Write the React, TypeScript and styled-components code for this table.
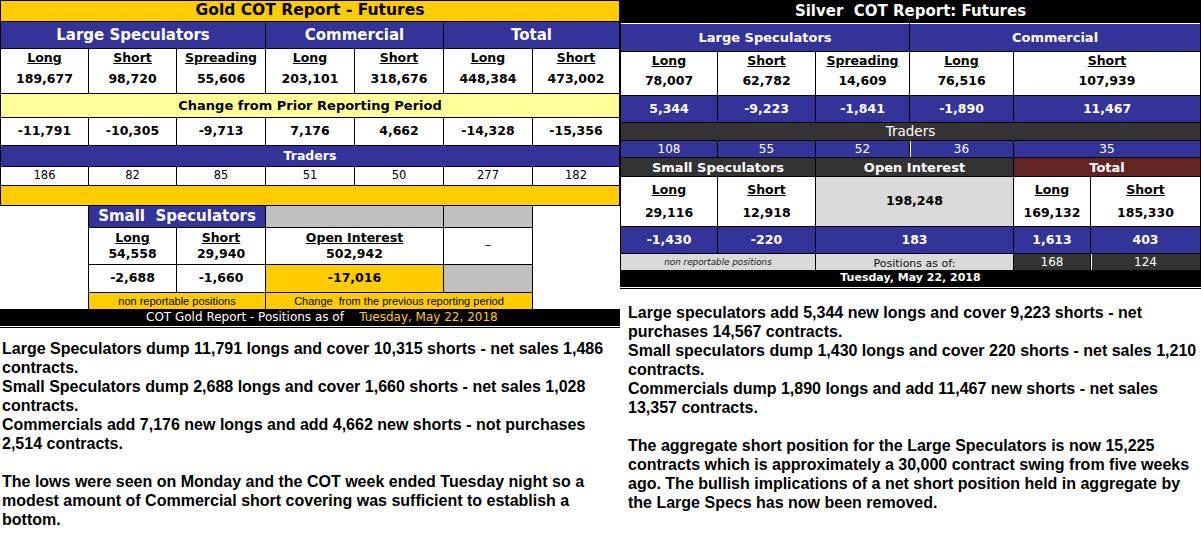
import React from "react";
import styled, { createGlobalStyle } from "styled-components";

const GlobalStyle = createGlobalStyle`
  html, body { margin: 0; padding: 0; background: #fff; }
  body { font-family: "DejaVu Sans", Verdana, sans-serif; }
`;

const BLUE = "#333399";
const GOLD = "#FFCC00";
const PALE = "#FFFF99";
const GREY = "#C0C0C0";
const LIGHT = "#D9D9D9";
const DARK = "#333333";
const MAROON = "#632523";

const Page = styled.div`
  display: flex;
  width: 1201px;
  height: 540px;
  overflow: hidden;
  background: #fff;
`;

const Column = styled.section<{ $w: number }>`
  width: ${(p) => p.$w}px;
  flex: none;
  display: flex;
  flex-direction: column;
`;

const Grid = styled.div<{ $cols: string; $rows: string; $pad: string }>`
  display: grid;
  grid-template-columns: ${(p) => p.$cols};
  grid-template-rows: ${(p) => p.$rows};
  gap: 1px;
  padding: ${(p) => p.$pad};
  background: #000;
  font-family: "DejaVu Sans", Verdana, sans-serif;
`;

type CellProps = {
  $span?: number;
  $rows?: number;
  $bg?: string;
  $fg?: string;
  $size?: number;
  $weight?: number;
  $italic?: boolean;
  $narrow?: boolean;
  $edge?: string;
  $top?: string;
  $alignY?: string;
  $padTop?: number;
  $bleed?: "left" | "right";
};

const Cell = styled.div<CellProps>`
  grid-column: span ${(p) => p.$span ?? 1};
  grid-row: span ${(p) => p.$rows ?? 1};
  background: ${(p) => p.$bg ?? "#fff"};
  color: ${(p) => p.$fg ?? "#000"};
  font-size: ${(p) => p.$size ?? 12.5}px;
  font-weight: ${(p) => p.$weight ?? 700};
  font-style: ${(p) => (p.$italic ? "italic" : "normal")};
  font-family: ${(p) =>
    p.$narrow
      ? `"Liberation Sans Narrow", "Liberation Sans", Arial, sans-serif`
      : `"DejaVu Sans", Verdana, sans-serif`};
  font-stretch: ${(p) => (p.$narrow ? "condensed" : "normal")};
  display: flex;
  align-items: ${(p) => p.$alignY ?? "center"};
  justify-content: center;
  padding-top: ${(p) => p.$padTop ?? 0}px;
  box-sizing: border-box;
  white-space: pre;
  overflow: hidden;
  line-height: 1;
  margin-left: ${(p) => (p.$bleed === "left" ? "-1px" : "0")};
  margin-right: ${(p) => (p.$bleed === "right" ? "-1px" : "0")};
  box-shadow: ${(p) =>
    [p.$edge ? `inset 1px 0 0 ${p.$edge}` : "", p.$top ? `inset 0 1px 0 ${p.$top}` : ""]
      .filter(Boolean)
      .join(", ") || "none"};
`;

const Stack = styled.div<{ $span?: number; $bg?: string; $pad: number; $gap: number; $lh: number }>`
  grid-column: span ${(p) => p.$span ?? 1};
  background: ${(p) => p.$bg ?? "#fff"};
  display: flex;
  flex-direction: column;
  align-items: center;
  padding-top: ${(p) => p.$pad}px;
  gap: ${(p) => p.$gap}px;
  line-height: ${(p) => p.$lh}px;
  color: #000;
  font-weight: 700;
  white-space: nowrap;
`;

const Label = styled.span`
  font-size: 12.5px;
  text-decoration: underline;
  text-underline-offset: 1px;
`;

const Value = styled.span`
  font-size: 12.5px;
`;

const DateBar = styled.div<{ $h: number; $size: number; $weight: number; $pad?: number }>`
  height: ${(p) => p.$h}px;
  background: #000;
  background-clip: padding-box;
  border-bottom: 3px double #000;
  color: #fff;
  font-family: "DejaVu Sans", Verdana, sans-serif;
  font-size: ${(p) => p.$size}px;
  font-weight: ${(p) => p.$weight};
  line-height: ${(p) => p.$h}px;
  white-space: pre;
  text-align: ${(p) => (p.$pad ? "left" : "center")};
  padding-left: ${(p) => p.$pad ?? 0}px;
`;

const Accent = styled.span`
  color: ${GOLD};
`;

const Notes = styled.div<{ $top: number; $left: number }>`
  margin-top: ${(p) => p.$top}px;
  padding: 0 2px 0 ${(p) => p.$left}px;
  font-family: "Liberation Sans", Arial, sans-serif;
  font-weight: 700;
  font-size: 16px;
  line-height: 19px;
  color: #000;
`;

const Para = styled.p<{ $gapAbove?: boolean }>`
  margin: ${(p) => (p.$gapAbove ? "19px 0 0" : "0")};
`;

const Dash = styled.span<{ $fg: string }>`
  color: ${(p) => p.$fg};
  font-size: 11px;
  font-weight: 400;
`;

const LS = (label: string, value: string, span = 1) => ({ label, value, span });

function GoldReport() {
  const top = [LS("Long", "189,677"), LS("Short", "98,720"), LS("Spreading", "55,606"), LS("Long", "203,101"), LS("Short", "318,676"), LS("Long", "448,384"), LS("Short", "473,002")];
  const changes = ["-11,791", "-10,305", "-9,713", "7,176", "4,662", "-14,328", "-15,356"];
  const traders = ["186", "82", "85", "51", "50", "277", "182"];
  return (
    <Column $w={620}>
      <Grid
        $cols="87px 87px 88px 88px 88px 88px 86px"
        $rows="20px 26px 44px 23px 27px 20px 18px 19px 21px 36px 27px 16px"
        $pad="1px 1px 0 1px"
      >
        <Cell $span={7} $bg={GOLD} $size={15.5}>Gold COT Report - Futures</Cell>
        <Cell $span={3} $bg={BLUE} $fg="#fff" $size={15}>Large Speculators</Cell>
        <Cell $span={2} $bg={BLUE} $fg="#fff" $size={15}>Commercial</Cell>
        <Cell $span={2} $bg={BLUE} $fg="#fff" $size={15}>Total</Cell>
        {top.map((c, i) => (
          <Stack key={i} $pad={0} $gap={3} $lh={18}>
            <Label>{c.label}</Label>
            <Value>{c.value}</Value>
          </Stack>
        ))}
        <Cell $span={7} $bg={PALE} $size={13}>Change from Prior Reporting Period</Cell>
        {changes.map((v, i) => (
          <Cell key={i}>{v}</Cell>
        ))}
        <Cell $span={7} $bg={BLUE} $fg="#fff" $size={12.5}>Traders</Cell>
        {traders.map((v, i) => (
          <Cell key={i} $weight={400} $size={11.5}>{v}</Cell>
        ))}
        <Cell $span={7} $bg={GOLD} />
        <Cell $rows={4} $bleed="left" />
        <Cell $span={2} $bg={BLUE} $fg="#fff" $size={15}>{"Small  Speculators"}</Cell>
        <Cell $span={2} $bg={GREY} />
        <Cell $bg={GREY} $alignY="flex-end"><Dash $fg="#fff">_</Dash></Cell>
        <Cell $rows={4} $bleed="right" />
        <Stack $pad={2} $gap={0} $lh={16}>
          <Label>Long</Label>
          <Value>54,558</Value>
        </Stack>
        <Stack $pad={2} $gap={0} $lh={16}>
          <Label>Short</Label>
          <Value>29,940</Value>
        </Stack>
        <Stack $span={2} $pad={2} $gap={0} $lh={16}>
          <Label>Open Interest</Label>
          <Value>502,942</Value>
        </Stack>
        <Cell $alignY="flex-start" $padTop={6}><Dash $fg="#000">_</Dash></Cell>
        <Cell>-2,688</Cell>
        <Cell>-1,660</Cell>
        <Cell $span={2} $bg={GOLD}>-17,016</Cell>
        <Cell $bg={GREY} />
        <Cell $span={2} $bg={GOLD} $weight={400} $size={11} $narrow>non reportable positions</Cell>
        <Cell $span={3} $bg={GOLD} $weight={400} $size={11} $narrow>Change  from the previous reporting period</Cell>
      </Grid>
      <DateBar $h={16} $size={12} $weight={400} $pad={146}>
        {"COT Gold Report - Positions as of    "}
        <Accent>Tuesday, May 22, 2018</Accent>
      </DateBar>
      <Notes $top={11} $left={2}>
        <Para>Large Speculators dump 11,791 longs and cover 10,315 shorts - net sales 1,486 contracts.</Para>
        <Para>Small Speculators dump 2,688 longs and cover 1,660 shorts - net sales 1,028 contracts.</Para>
        <Para>Commercials add 7,176 new longs and add 4,662 new shorts - not purchases 2,514 contracts.</Para>
        <Para $gapAbove>The lows were seen on Monday and the COT week ended Tuesday night so a modest amount of Commercial short covering was sufficient to establish a bottom.</Para>
      </Notes>
    </Column>
  );
}

function SilverReport() {
  const top = [LS("Long", "78,007"), LS("Short", "62,782"), LS("Spreading", "14,609"), LS("Long", "76,516"), LS("Short", "107,939", 2)];
  return (
    <Column $w={581}>
      <Grid
        $cols="96px 97px 93px 103px 76px 109px"
        $rows="22px 28px 43px 26px 17px 16px 18px 49px 26px 16px"
        $pad="0 1px"
      >
        <Cell $span={6} $bg="#000" $fg="#fff" $size={15}>{"Silver  COT Report: Futures"}</Cell>
        <Cell $span={3} $bg={BLUE} $fg="#fff" $size={13} $top="#fff">Large Speculators</Cell>
        <Cell $span={3} $bg={BLUE} $fg="#fff" $size={13} $top="#fff">Commercial</Cell>
        {top.map((c, i) => (
          <Stack key={i} $span={c.span} $pad={0} $gap={2} $lh={18}>
            <Label>{c.label}</Label>
            <Value>{c.value}</Value>
          </Stack>
        ))}
        <Cell $bg={BLUE} $fg="#fff">5,344</Cell>
        <Cell $bg={BLUE} $fg="#fff">-9,223</Cell>
        <Cell $bg={BLUE} $fg="#fff">-1,841</Cell>
        <Cell $bg={BLUE} $fg="#fff">-1,890</Cell>
        <Cell $span={2} $bg={BLUE} $fg="#fff">11,467</Cell>
        <Cell $span={6} $bg={DARK} $fg="#fff" $weight={400} $size={13.5}>Traders</Cell>
        <Cell $bg={BLUE} $fg="#fff" $weight={400} $size={12}>108</Cell>
        <Cell $bg={BLUE} $fg="#fff" $weight={400} $size={12}>55</Cell>
        <Cell $bg={BLUE} $fg="#fff" $weight={400} $size={12}>52</Cell>
        <Cell $bg={BLUE} $fg="#fff" $weight={400} $size={12} $edge="#fff">36</Cell>
        <Cell $span={2} $bg={BLUE} $fg="#fff" $weight={400} $size={12}>35</Cell>
        <Cell $span={2} $bg={DARK} $fg="#fff" $size={13}>Small Speculators</Cell>
        <Cell $span={2} $bg={DARK} $fg="#fff" $size={13}>Open Interest</Cell>
        <Cell $span={2} $bg={MAROON} $fg="#fff" $size={13}>Total</Cell>
        <Stack $pad={4} $gap={5} $lh={18}>
          <Label>Long</Label>
          <Value>29,116</Value>
        </Stack>
        <Stack $pad={4} $gap={5} $lh={18}>
          <Label>Short</Label>
          <Value>12,918</Value>
        </Stack>
        <Cell $span={2} $bg={LIGHT}>198,248</Cell>
        <Stack $pad={4} $gap={5} $lh={18}>
          <Label>Long</Label>
          <Value>169,132</Value>
        </Stack>
        <Stack $pad={4} $gap={5} $lh={18}>
          <Label>Short</Label>
          <Value>185,330</Value>
        </Stack>
        <Cell $bg={BLUE} $fg="#fff">-1,430</Cell>
        <Cell $bg={BLUE} $fg="#fff">-220</Cell>
        <Cell $span={2} $bg={BLUE} $fg="#fff">183</Cell>
        <Cell $bg={BLUE} $fg="#fff">1,613</Cell>
        <Cell $bg={BLUE} $fg="#fff">403</Cell>
        <Cell $span={2} $bg={LIGHT} $fg="#222" $weight={400} $size={8.8} $italic>non reportable positions</Cell>
        <Cell $span={2} $bg={LIGHT} $fg="#111" $weight={400} $size={11} $padTop={3}>Positions as of:</Cell>
        <Cell $bg={DARK} $fg="#fff" $weight={400} $size={12}>168</Cell>
        <Cell $bg={DARK} $fg="#fff" $weight={400} $size={12} $edge="#fff">124</Cell>
      </Grid>
      <DateBar $h={16} $size={11} $weight={700}>Tuesday, May 22, 2018</DateBar>
      <Notes $top={14} $left={8}>
        <Para>Large speculators add 5,344 new longs and cover 9,223 shorts - net purchases 14,567 contracts.</Para>
        <Para>Small speculators dump 1,430 longs and cover 220 shorts - net sales 1,210 contracts.</Para>
        <Para>Commercials dump 1,890 longs and add 11,467 new shorts - net sales 13,357 contracts.</Para>
        <Para $gapAbove>The aggregate short position for the Large Speculators is now 15,225 contracts which is approximately a 30,000 contract swing from five weeks ago. The bullish implications of a net short position held in aggregate by the Large Specs has now been removed.</Para>
      </Notes>
    </Column>
  );
}

export default function App() {
  return (
    <>
      <GlobalStyle />
      <Page>
        <GoldReport />
        <SilverReport />
      </Page>
    </>
  );
}
